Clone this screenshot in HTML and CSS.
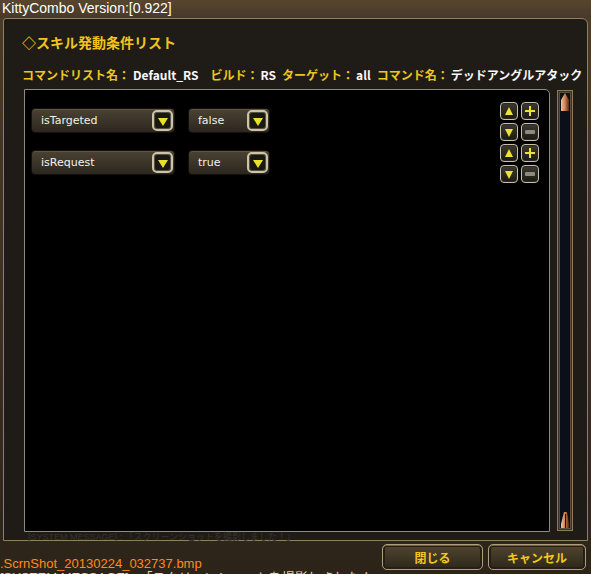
FILE: index.html
```html
<!DOCTYPE html>
<html lang="ja">
<head>
  <meta charset="UTF-8" />
  <title>KittyCombo</title>
  <link rel="stylesheet" href="styles.css">
</head>
<body>
  <div class="titlebar">KittyCombo Version:[0.922]</div>

  <div class="window">
    <h1 class="heading">◇スキル発動条件リスト</h1>
    <div class="info">
      <span class="label">コマンドリスト名：</span><span class="value wide-gap">Default_RS</span>
      <span class="label">ビルド：</span><span class="value">RS</span>
      <span class="label">ターゲット：</span><span class="value">all</span>
      <span class="label">コマンド名：</span><span class="value">デッドアングルアタック</span>
    </div>

    <div class="main">
      <div class="list">
        <div class="rows">
          <div class="row">
            <div class="select wide"><span class="select-text">isTargeted</span><span class="arrow"></span></div>
            <div class="select narrow"><span class="select-text">false</span><span class="arrow"></span></div>
          </div>
          <div class="row">
            <div class="select wide"><span class="select-text">isRequest</span><span class="arrow"></span></div>
            <div class="select narrow"><span class="select-text">true</span><span class="arrow"></span></div>
          </div>
        </div>
        <div class="tools">
          <span class="tool up"></span><span class="tool plus"></span>
          <span class="tool down"></span><span class="tool minus"></span>
          <span class="tool up"></span><span class="tool plus"></span>
          <span class="tool down"></span><span class="tool minus"></span>
        </div>
      </div>
      <div class="scrollbar">
        <svg class="thumb" width="10" height="18" viewBox="0 0 10 18">
          <defs>
            <linearGradient id="tg" x1="0" y1="0" x2="1" y2="0">
              <stop offset="0" stop-color="#f4c4a0"/>
              <stop offset="0.5" stop-color="#d08050"/>
              <stop offset="1" stop-color="#5a2a10"/>
            </linearGradient>
          </defs>
          <path d="M5 0 L9 7 L9 18 L1 18 L1 7 Z" fill="url(#tg)"/>
        </svg>
        <svg class="thumb" width="10" height="16" viewBox="0 0 10 16">
          <path d="M4 0 L7 0 L9 12 L9 16 L1 16 L1 12 Z" fill="url(#tg)"/>
          <path d="M5 2 L6 2 L6 16 L5 16 Z" fill="#1a1410"/>
        </svg>
      </div>
    </div>
    <div class="ghost">[SYSTEM MESSAGE] : 「スクリーンショットを撮影しました！」</div>
  </div>

  <div class="footer">
    <div class="log">
      <div class="log-file">.ScrnShot_20130224_032737.bmp</div>
      <div class="log-msg">[SYSTEM MESSAGE] : 「スクリーンショットを撮影しました！」</div>
    </div>
    <div class="buttons">
      <button class="btn close">閉じる</button>
      <button class="btn cancel">キャンセル</button>
    </div>
  </div>
</body>
</html>
```

FILE: styles.css
```css
body {
  margin: 0;
  width: 591px;
  height: 574px;
  overflow: hidden;
  background: linear-gradient(#4c3c28, #3a2f20 60%, #2c2419);
  font-family: "Liberation Sans", "Noto Sans CJK JP", sans-serif;
  color: #f0f0f0;
}

/* title bar */
.titlebar {
  height: 18px;
  line-height: 17px;
  padding-left: 2px;
  font-size: 14px;
  color: #ffffff;
  background: linear-gradient(#57462e, #47392a);
}

/* main window */
.window {
  box-sizing: border-box;
  margin-left: 3px;
  width: 585px;
  height: 523px;
  padding: 14px 0 0 18px;
  border: 1px solid #8f8062;
  border-radius: 3px 6px 0 0;
  background: #1f1c17;
  display: flex;
  flex-direction: column;
}
.heading {
  margin: 0;
  height: 18px;
  line-height: 18px;
  font-size: 14px;
  font-weight: bold;
  color: #f2c41a;
  font-family: "Noto Sans CJK JP", sans-serif;
}
.info {
  margin-top: 16px;
  height: 16px;
  line-height: 16px;
  font-size: 12px;
  white-space: nowrap;
  display: flex;
  align-items: baseline;
  font-family: "Noto Sans CJK JP", sans-serif;
  font-weight: bold;
}
.label {
  color: #eec51c;
}
.value {
  margin: 0 6px 0 2px;
  color: #f8f8f8;
}
.value.wide-gap {
  margin-left: 3px;
  margin-right: 12px;
}

.main {
  margin: 6px 0 0 2px;
  display: flex;
  gap: 7px;
}
.list {
  box-sizing: border-box;
  width: 526px;
  height: 443px;
  border: 1px solid #8e8a80;
  border-radius: 0 5px 0 0;
  background: #000;
  display: flex;
  justify-content: space-between;
}
.rows {
  padding: 18px 0 0 6px;
  display: flex;
  flex-direction: column;
  gap: 17px;
}
.row {
  display: flex;
  gap: 13px;
}
.select {
  box-sizing: border-box;
  height: 25px;
  padding: 0 1px 0 9px;
  display: flex;
  align-items: center;
  justify-content: space-between;
  border: 1px solid #14110c;
  border-radius: 4px;
  background: linear-gradient(#4a4233, #2c271f);
  box-shadow: inset 0 1px 0 #5e5545;
}
.select.wide { width: 144px; }
.select.narrow { width: 82px; }
.select-text {
  font-family: "DejaVu Sans", sans-serif;
  font-size: 11px;
  color: #f2f1ea;
}
.arrow {
  box-sizing: border-box;
  width: 21px;
  height: 21px;
  border: 2px solid #cfc3a6;
  border-radius: 5px;
  background: #1a1813;
  box-shadow: inset 0 0 0 1px #55504a;
  position: relative;
}
.arrow::after {
  content: "";
  position: absolute;
  left: 4px;
  top: 6px;
  border-left: 5px solid transparent;
  border-right: 5px solid transparent;
  border-top: 8px solid #e8e02a;
}

.tools {
  padding: 12px 10px 0 0;
  display: grid;
  grid-template-columns: 18px 18px;
  grid-auto-rows: 18px;
  gap: 3px;
  align-content: start;
}
.tool {
  box-sizing: border-box;
  border: 1px solid #c8c0a8;
  border-radius: 4px;
  background: linear-gradient(#3c3a30, #1a1914);
  box-shadow: inset 0 0 0 1px #2a2820;
  position: relative;
}
.tool::after {
  content: "";
  position: absolute;
}
.tool.up::after {
  left: 4px;
  top: 4px;
  border-left: 4px solid transparent;
  border-right: 4px solid transparent;
  border-bottom: 8px solid #eee236;
}
.tool.down::after {
  left: 4px;
  top: 5px;
  border-left: 4px solid transparent;
  border-right: 4px solid transparent;
  border-top: 8px solid #eee236;
}
.tool.plus::after {
  left: 3px;
  top: 7px;
  width: 10px;
  height: 2px;
  background: #eee236;
}
.tool.plus::before {
  content: "";
  position: absolute;
  left: 7px;
  top: 3px;
  width: 2px;
  height: 10px;
  background: #eee236;
}
.tool.minus::after {
  left: 3px;
  top: 6px;
  width: 10px;
  height: 4px;
  background: #8c8a7c;
  border-radius: 1px;
}

.scrollbar {
  box-sizing: border-box;
  width: 16px;
  height: 441px;
  margin-top: 1px;
  border: 1px solid #8c7c5a;
  background: #0a0f1a;
  box-shadow: inset 0 0 0 1px #3a3224, inset 0 0 0 2px #5a5040;
  display: flex;
  flex-direction: column;
  justify-content: space-between;
  align-items: center;
  padding: 2px 0 2px;
}

/* chat log seen through the window */
.ghost {
  height: 10px;
  font-size: 9px;
  line-height: 10px;
  padding-left: 6px;
  color: #36332c;
  white-space: nowrap;
}

/* footer under the window */
.footer {
  display: flex;
  justify-content: space-between;
}
.log {
  flex: 1;
  min-width: 0;
  padding-top: 16px;
  font-size: 13px;
  line-height: 14px;
  white-space: nowrap;
}
.log-file {
  color: #ff8a1c;
}
.log-msg {
  color: #e8d890;
}
.buttons {
  flex-shrink: 0;
  margin-top: 3px;
  padding-right: 5px;
  display: flex;
  gap: 5px;
  align-self: flex-start;
}
.btn {
  box-sizing: border-box;
  height: 26px;
  border: 1px solid #b09e7c;
  border-radius: 5px;
  background: linear-gradient(#51462f, #2d271b);
  box-shadow: inset 0 1px 0 #6b5f48, inset 0 0 0 2px #241e15;
  color: #f2c81c;
  font-family: "Noto Sans CJK JP", sans-serif;
  font-weight: bold;
  font-size: 12px;
  padding: 0;
}
.btn.close { width: 101px; }
.btn.cancel { width: 98px; }
```
